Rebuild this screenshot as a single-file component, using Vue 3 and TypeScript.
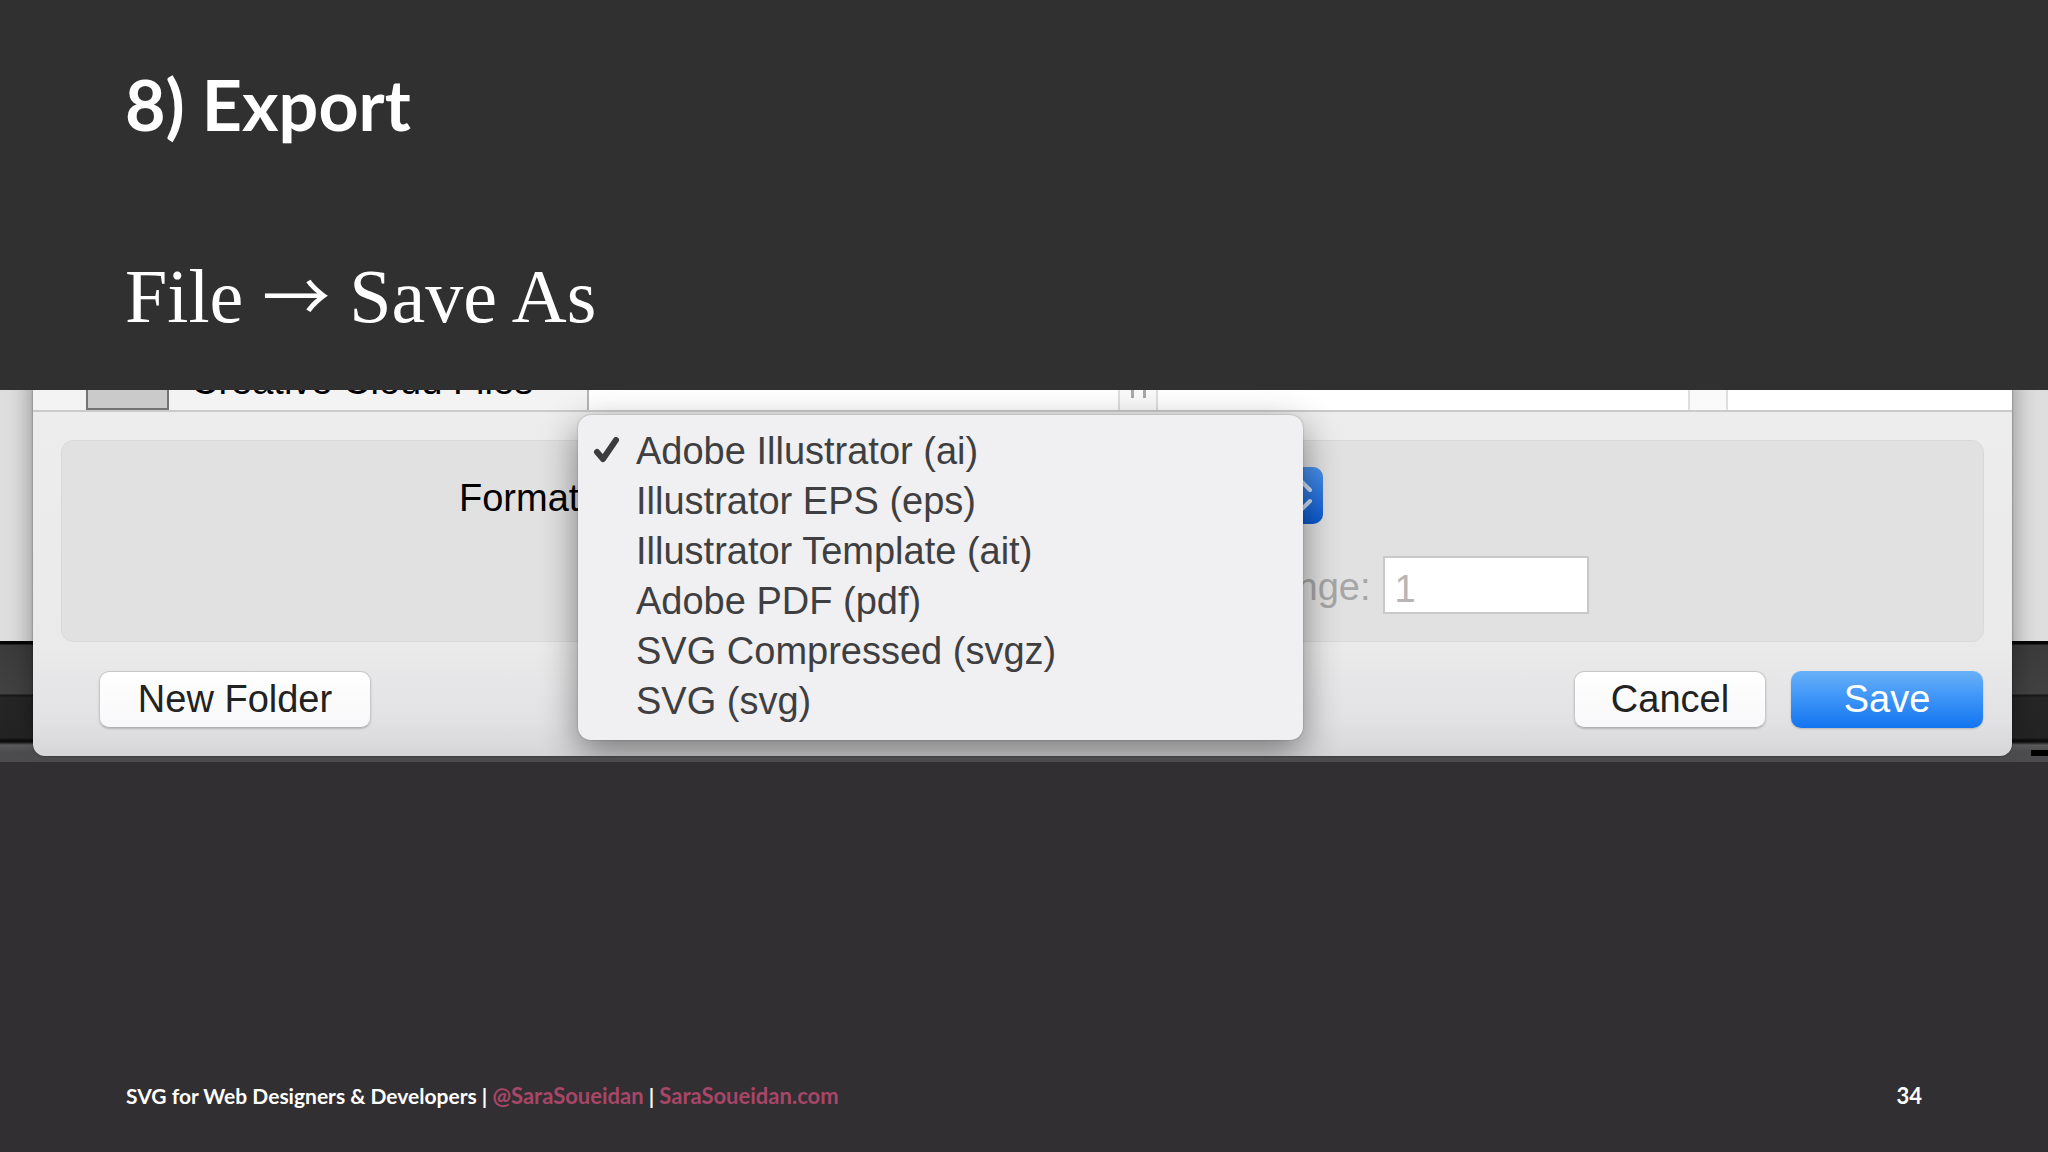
<script setup lang="ts">
import { ref } from 'vue'

const formats: string[] = [
  'Adobe Illustrator (ai)',
  'Illustrator EPS (eps)',
  'Illustrator Template (ait)',
  'Adobe PDF (pdf)',
  'SVG Compressed (svgz)',
  'SVG (svg)',
]
const selected = ref(formats[0])
const range = ref('1')
</script>

<template>
  <main class="slide">
    <header class="heading">
      <h1>8) Export</h1>
      <p>File <span class="arrow">→</span> Save As</p>
    </header>

    <section class="shot">
      <i class="notch"></i>
      <div class="dialog">
        <div class="browser">
          <div class="sidebar">
            <span class="thumb"></span>
            <span class="folder">Creative Cloud Files</span>
          </div>
          <div class="column"></div>
          <div class="scroll"><i></i><i></i></div>
          <div class="column"></div>
          <div class="scroll"></div>
          <div class="column last"></div>
        </div>

        <div class="panel">
          <div class="row">
            <label for="format">Format:</label>
            <div class="select">
              <select id="format" v-model="selected">
                <option v-for="f in formats" :key="f">{{ f }}</option>
              </select>
              <svg class="cap" width="46" height="57" viewBox="0 0 46 57" aria-hidden="true">
                <path d="M13 23L23 13L33 23M13 34L23 44L33 34" fill="none" stroke="#d3e3f8" stroke-width="4" stroke-linecap="round" stroke-linejoin="round" />
              </svg>
            </div>
          </div>
          <div class="row range">
            <label for="range">Range:</label>
            <input id="range" v-model="range" type="text" disabled />
          </div>
        </div>

        <div class="actions">
          <button type="button" class="new">New Folder</button>
          <button type="button" class="cancel">Cancel</button>
          <button type="button" class="save">Save</button>
        </div>

        <ul class="menu" role="listbox">
          <li v-for="f in formats" :key="f" role="option" :aria-selected="f === selected" @click="selected = f">
            <span class="tick">
              <svg v-if="f === selected" width="28" height="28" viewBox="0 0 28 28" aria-hidden="true">
                <path d="M4 15L10 22L23 3" fill="none" stroke="#3c3c3e" stroke-width="6" stroke-linecap="round" stroke-linejoin="round" />
              </svg>
            </span>
            <span>{{ f }}</span>
          </li>
        </ul>
      </div>
    </section>

    <footer class="footer">
      <p>
        SVG for Web Designers &amp; Developers | <a href="#twitter">@SaraSoueidan</a> |
        <a href="#site">SaraSoueidan.com</a>
      </p>
      <span class="page">34</span>
    </footer>
  </main>
</template>

<style>
body {
  margin: 0;
  background: #322f32;
}
</style>

<style scoped>
.slide {
  box-sizing: border-box;
  min-height: 100vh;
  display: flex;
  flex-direction: column;
  background: linear-gradient(#303030 390px, #322f32 390px);
  color: #fff;
}
.heading {
  box-sizing: border-box;
  height: 390px;
  padding: 62px 125px 0;
}
h1 {
  margin: 0;
  font: 700 70px/84px Lato, "Open Sans", sans-serif;
}
.heading p {
  margin: 105px 0 0;
  font: 76px/90px "Liberation Serif", serif;
}
.arrow {
  font-family: "Noto Sans CJK JP", sans-serif;
  font-size: 68px;
  line-height: 60px;
}
.shot {
  position: relative;
  overflow: hidden;
  padding: 0 36px 6px 33px;
  background: linear-gradient(
    #dedede 251px,
    #060606 251px,
    #060606 254px,
    #3b3b3b 255px,
    #424243 304px,
    #161616 305px,
    #262627 308px,
    #232324 348px,
    #0c0c0c 350px,
    #101010 352px,
    #5a5a5b 355px,
    #4c4b4d 362px,
    #4c4b4d
  );
}
.notch {
  position: absolute;
  right: 0;
  bottom: 6px;
  width: 17px;
  height: 6px;
  background: #000;
}
.dialog {
  position: relative;
  overflow: hidden;
  height: 366px;
  border-radius: 0 0 12px 12px;
  background: linear-gradient(#eeedee 0, #ebeaeb 260px, #e2e1e3 330px, #d6d5d7);
  box-shadow: 0 -20px 26px rgba(0, 0, 0, 0.4), 0 0 2px rgba(0, 0, 0, 0.5);
  font: 38px/50px "Liberation Sans", Arial, sans-serif;
}
.browser {
  display: flex;
  height: 20px;
  overflow: hidden;
  border-bottom: 2px solid #cbcacb;
  background: #fff;
}
.sidebar {
  box-sizing: border-box;
  display: flex;
  align-items: flex-end;
  gap: 22px;
  width: 556px;
  padding-left: 53px;
  border-right: 2px solid #b4b4b4;
  background: #f4f3f4;
}
.thumb {
  box-sizing: border-box;
  width: 83px;
  height: 40px;
  border: 2px solid #747474;
  background: #cacaca;
}
.folder {
  height: 54px;
  color: #000;
}
.column {
  flex: 529 1 0;
}
.column.last {
  flex-grow: 284;
}
.scroll {
  box-sizing: border-box;
  display: flex;
  justify-content: center;
  gap: 9px;
  width: 40px;
  border: solid #dededf;
  border-width: 0 2px;
  background: #fafafa;
}
.scroll i {
  width: 3px;
  height: 8px;
  background: #a8a8a8;
}
.panel {
  box-sizing: border-box;
  height: 202px;
  margin: 28px 28px 0;
  padding: 26px 0 0;
  border: 1px solid #dad9da;
  border-radius: 12px;
  background: #e2e1e2;
}
.row {
  display: flex;
  align-items: center;
  gap: 8px;
  height: 57px;
  padding-left: 397px;
  color: #000;
}
.row.range {
  height: 58px;
  margin-top: 32px;
  padding-left: 1186px;
  gap: 12px;
  color: #a6a6a6;
}
label {
  padding-top: 4px;
}
.select {
  position: relative;
  width: 725px;
  height: 57px;
}
select {
  appearance: none;
  box-sizing: border-box;
  width: 100%;
  height: 100%;
  padding: 0 60px 0 20px;
  border: 1px solid #c4c4c4;
  border-radius: 10px;
  background: #fff;
  color: #222;
  font: inherit;
}
.cap {
  position: absolute;
  top: 0;
  right: 0;
  border-radius: 0 10px 10px 0;
  background: linear-gradient(#4a93ee, #0b58d0);
}
input {
  box-sizing: border-box;
  width: 206px;
  height: 58px;
  padding: 8px 10px 0;
  border: 2px solid #cac9ca;
  background: #fff;
  color: #b9b5b4;
  font: inherit;
}
.actions {
  display: flex;
  gap: 25px;
  padding: 29px 29px 0 66px;
}
button {
  box-sizing: border-box;
  height: 57px;
  padding: 0 0 2px;
  border: 1px solid #c8c7c9;
  border-bottom-color: #b0afb1;
  border-radius: 10px;
  background: linear-gradient(#fff, #f8f7f9);
  box-shadow: 0 1px 2px rgba(0, 0, 0, 0.2);
  color: #222;
  font: inherit;
}
.new {
  width: 272px;
  margin-right: auto;
}
.cancel,
.save {
  width: 192px;
}
.save {
  border: 0;
  background: linear-gradient(#69b1f9, #3b93f7 50%, #1274f0);
  color: #fff;
}
.menu {
  position: absolute;
  top: 25px;
  left: 545px;
  box-sizing: border-box;
  width: 725px;
  height: 325px;
  margin: 0;
  padding: 11px 0 0;
  border-radius: 13px;
  background: #f0eff1;
  box-shadow: 0 12px 36px rgba(0, 0, 0, 0.46), 0 0 2px rgba(0, 0, 0, 0.3);
  color: #3f3f41;
  list-style: none;
}
li {
  display: flex;
  align-items: center;
  height: 50px;
}
.tick {
  display: flex;
  justify-content: center;
  width: 58px;
}
.footer {
  display: flex;
  justify-content: space-between;
  margin-top: auto;
  padding: 0 126px 40px;
  font: 700 21px/32px Lato, "Open Sans", sans-serif;
}
.footer p {
  margin: 0;
}
a,
.page {
  font-size: 22px;
}
a {
  color: #a84668;
  text-decoration: none;
}
</style>
